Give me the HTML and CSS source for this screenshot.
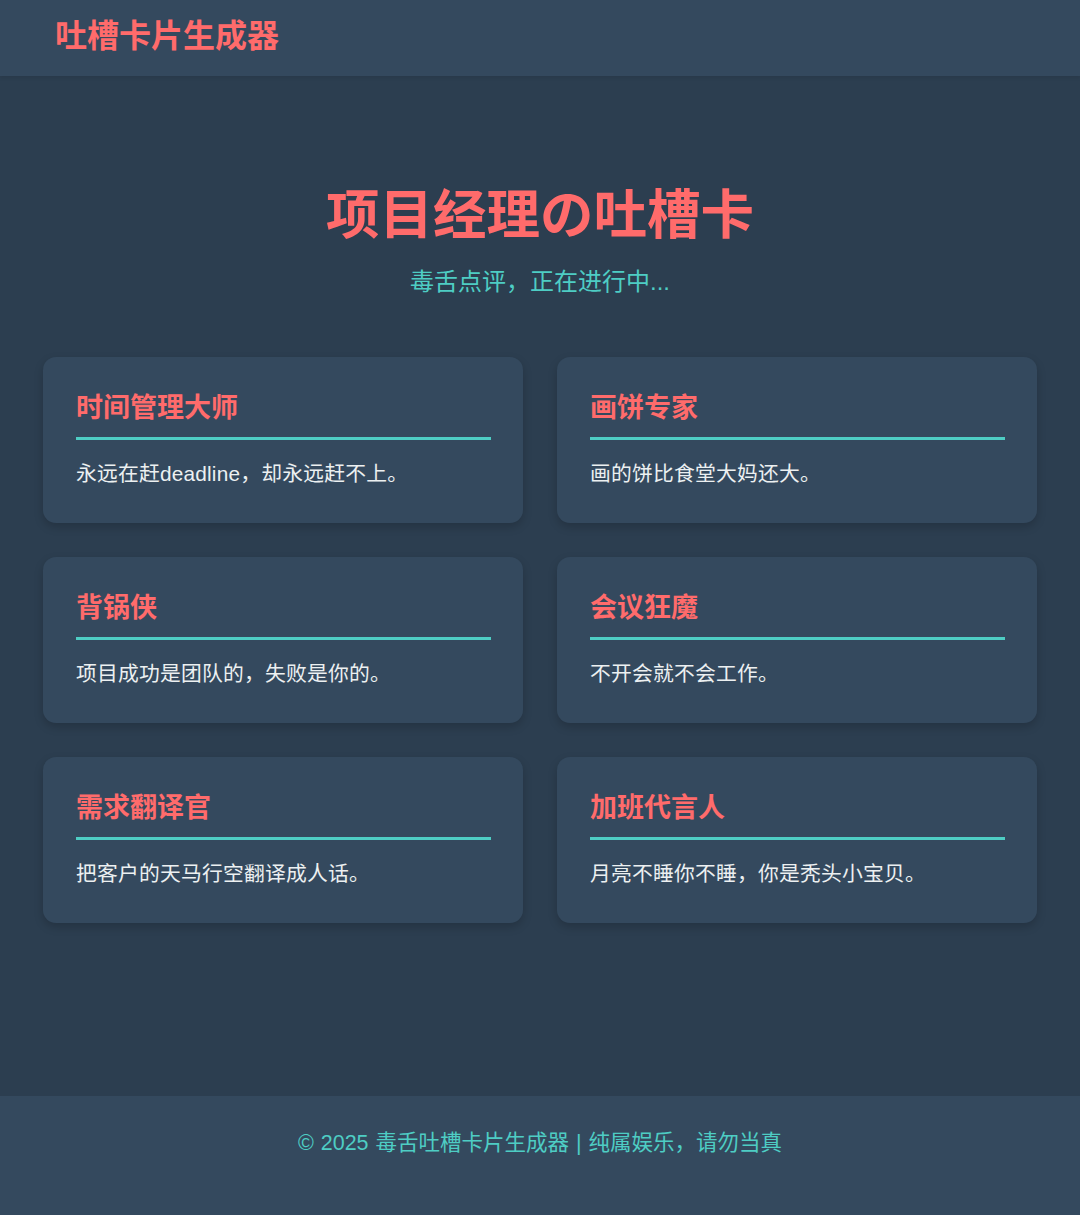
FILE: index.html
```html
<!DOCTYPE html>
<html lang="zh-CN">
<head>
<meta charset="UTF-8">
<title>吐槽卡片生成器</title>
<link rel="stylesheet" href="styles.css">
</head>
<body>
<header class="topbar">
  <div class="brand">吐槽卡片生成器</div>
</header>
<main class="page">
  <h1 class="hero-title">项目经理の吐槽卡</h1>
  <p class="hero-sub">毒舌点评，正在进行中...</p>
  <section class="grid">
    <article class="card">
      <h2 class="card-title">时间管理大师</h2>
      <p class="card-text">永远在赶deadline，却永远赶不上。</p>
    </article>
    <article class="card">
      <h2 class="card-title">画饼专家</h2>
      <p class="card-text">画的饼比食堂大妈还大。</p>
    </article>
    <article class="card">
      <h2 class="card-title">背锅侠</h2>
      <p class="card-text">项目成功是团队的，失败是你的。</p>
    </article>
    <article class="card">
      <h2 class="card-title">会议狂魔</h2>
      <p class="card-text">不开会就不会工作。</p>
    </article>
    <article class="card">
      <h2 class="card-title">需求翻译官</h2>
      <p class="card-text">把客户的天马行空翻译成人话。</p>
    </article>
    <article class="card">
      <h2 class="card-title">加班代言人</h2>
      <p class="card-text">月亮不睡你不睡，你是秃头小宝贝。</p>
    </article>
  </section>
</main>
<footer class="footer">
  <p>© 2025 毒舌吐槽卡片生成器 | 纯属娱乐，请勿当真</p>
</footer>
</body>
</html>
```

FILE: styles.css
```css
* {
  box-sizing: border-box;
}

html, body {
  margin: 0;
  padding: 0;
}

body {
  background: #2c3e50;
  color: #ecf0f1;
  font-family: "Liberation Sans", "Noto Sans CJK SC", sans-serif;
  min-height: 1215px;
  display: flex;
  flex-direction: column;
}

.topbar {
  background: #34495e;
  height: 76px;
  padding: 0 55px;
  display: flex;
  align-items: center;
  box-shadow: 0 2px 4px rgba(0, 0, 0, 0.08);
}

.brand {
  color: #ff6b6b;
  font-size: 32px;
  font-weight: 700;
  line-height: 1;
  margin-top: -4px;
}

.page {
  flex: 1;
  padding: 104px 43px 0;
}

.hero-title {
  margin: 0;
  text-align: center;
  color: #ff6b6b;
  font-size: 53.5px;
  font-weight: 700;
  line-height: 72px;
}

.hero-sub {
  margin: 13px 0 0;
  text-align: center;
  color: #4ecdc4;
  font-size: 24px;
  line-height: 34px;
}

.grid {
  margin-top: 58px;
  display: grid;
  grid-template-columns: 1fr 1fr;
  column-gap: 34px;
  row-gap: 34px;
}

.card {
  background: #34495e;
  border-radius: 13px;
  padding: 31px 32px 30px 33px;
  height: 166px;
  box-shadow: 0 4px 10px rgba(0, 0, 0, 0.18);
}

.card-title {
  margin: 0;
  color: #ff6b6b;
  font-size: 27px;
  font-weight: 700;
  line-height: 40px;
  padding-bottom: 9px;
  border-bottom: 3px solid #4ecdc4;
}

.card-text {
  margin: 17px 0 0;
  font-size: 20.8px;
  line-height: 34px;
  color: #ecf0f1;
  letter-spacing: 0.2px;
}

.footer {
  background: #34495e;
  height: 119px;
  display: flex;
  justify-content: center;
  padding-top: 30px;
}

.footer p {
  margin: 0;
  color: #4ecdc4;
  font-size: 21.5px;
  line-height: 34px;
  word-spacing: 1px;
}
```
